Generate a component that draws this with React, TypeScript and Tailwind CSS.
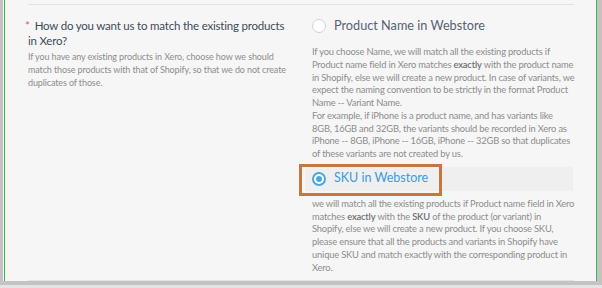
const lato = "font-['Lato','Open_Sans',sans-serif]"

const Desc = ({ children, small }: { children: React.ReactNode; small?: boolean }) => (
  <p
    className={`whitespace-nowrap leading-[12.75px] text-[#8d8d8d] [&>span]:block ${
      small ? 'text-[9px] tracking-[-0.12px]' : 'text-[9.35px] tracking-[-0.18px]'
    }`}
  >
    {children}
  </p>
)

const B = ({ children }: { children: React.ReactNode }) => (
  <b className="font-semibold text-[#707070]">{children}</b>
)

export default function App() {
  return (
    <div className={`w-[602px] h-[288px] bg-[#e4e4e4] ${lato}`}>
      <div className="h-[285px] border-l-[3px] border-r-[5px] border-b-[4px] border-[#c3c3c3] bg-[#f6f6f6]">
        <div className="ml-px h-full flex flex-col border-x border-[#3cb44b] pl-[23px] pr-[22px]">
          <div className="mt-[4px] h-px bg-[#e3e3e3]" />

          <div className="flex flex-1 gap-[15px]">
            {/* left: question */}
            <div className="w-[262px] pt-[13px]">
              <h3 className="text-[11.5px] leading-[15px] tracking-[-0.2px] text-[#3e4a5a]">
                <span className="-ml-[3px] mr-[5px] text-[#d9577f]">*</span>
                How do you want us to match the existing products in Xero?
              </h3>
              <div className="mt-[3px]">
                <Desc small>
                  <span>If you have any existing products in Xero, choose how we should</span>
                  <span>match those products with that of Shopify, so that we do not create</span>
                  <span>duplicates of those.</span>
                </Desc>
              </div>
            </div>

            {/* right: options */}
            <div className="w-[268px] pt-[9px]">
              <label className="flex h-[24px] items-center gap-[8px] pl-[7px]">
                <span className="h-[14px] w-[14px] rounded-full border border-[#d2d2d2] bg-white" />
                <span className="text-[12.7px] text-[#566272]">Product Name in Webstore</span>
              </label>
              <div className="mt-[8px] pl-[7px]">
                <Desc>
                  <span>If you choose Name, we will match all the existing products if</span>
                  <span>Product name field in Xero matches <B>exactly</B> with the product name</span>
                  <span>in Shopify, else we will create a new product. In case of variants, we</span>
                  <span>expect the naming convention to be strictly in the format Product</span>
                  <span>Name -- Variant Name.</span>
                  <span>For example, if iPhone is a product name, and has variants like</span>
                  <span>8GB, 16GB and 32GB, the variants should be recorded in Xero as</span>
                  <span>iPhone -- 8GB, iPhone -- 16GB, iPhone -- 32GB so that duplicates</span>
                  <span>of these variants are not created by us.</span>
                </Desc>
              </div>

              <div className="relative mt-[6px]">
                <label className="flex h-[24px] items-center gap-[8px] bg-[#efefef] pl-[7px]">
                  <span className="flex h-[14px] w-[14px] items-center justify-center rounded-full border-2 border-[#4aa6dc] bg-white">
                    <span className="h-[6px] w-[6px] rounded-full bg-[#4aa6dc]" />
                  </span>
                  <span className="text-[12.5px] text-[#3d9bd8]">SKU in Webstore</span>
                </label>
                <div className="absolute -left-[6px] -top-[3px] h-[32px] w-[143px] border-[3px] border-[#c4773e]" />
              </div>

              <div className="mt-[7px] pl-[7px]">
                <Desc>
                  <span>we will match all the existing products if Product name field in Xero</span>
                  <span>matches <B>exactly</B> with the <B>SKU</B> of the product (or variant) in</span>
                  <span>Shopify, else we will create a new product. If you choose SKU,</span>
                  <span>please ensure that all the products and variants in Shopify have</span>
                  <span>unique SKU and match exactly with the corresponding product in</span>
                  <span>Xero.</span>
                </Desc>
              </div>
            </div>
          </div>

          <div className="h-px bg-[#e3e3e3]" />
        </div>
      </div>
    </div>
  )
}
